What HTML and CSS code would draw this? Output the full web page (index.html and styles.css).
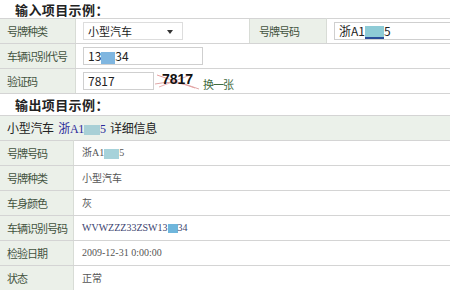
FILE: index.html
```html
<!DOCTYPE html>
<html lang="zh-CN">
<head>
    <meta charset="UTF-8">
    <title>机动车查询示例</title>
    <link rel="stylesheet" href="styles.css">
</head>
<body>
    <h3 class="title">输入项目示例：</h3>
    <table class="grid input-grid">
        <tr>
            <td class="label">号牌种类</td>
            <td class="value">
                <div class="select">小型汽车<span class="arrow"></span></div>
            </td>
            <td class="label">号牌号码</td>
            <td class="value">
                <div class="field wide">浙A1<span class="mask mask-plate"></span>5</div>
            </td>
        </tr>
        <tr>
            <td class="label">车辆识别代号</td>
            <td class="value" colspan="3">
                <div class="field vin">13<span class="mask mask-vin"></span>34</div>
            </td>
        </tr>
        <tr>
            <td class="label">验证码</td>
            <td class="value" colspan="3">
                <div class="captcha-row">
                    <div class="field code">7817</div>
                    <div class="captcha">
                        <svg width="44" height="20" viewBox="0 0 44 20">
                            <path d="M2 4 L40 17" stroke="#e8a0a0" stroke-width="1" fill="none"/>
                            <path d="M4 16 L38 3" stroke="#e8b0b0" stroke-width="1" fill="none"/>
                            <path d="M0 13 Q20 8 44 18" stroke="#e0a8a8" stroke-width="1" fill="none"/>
                        </svg>
                        <span>7817</span>
                    </div>
                    <a class="refresh">换一张</a>
                </div>
            </td>
        </tr>
    </table>

    <h3 class="title">输出项目示例：</h3>
    <div class="result-head">小型汽车 <span class="plate">浙A1<span class="mask mask-head"></span>5</span> 详细信息</div>
    <table class="grid output-grid">
        <tr>
            <td class="label">号牌号码</td>
            <td class="value serif gray">浙A1<span class="mask mask-small"></span>5</td>
        </tr>
        <tr>
            <td class="label">号牌种类</td>
            <td class="value gray">小型汽车</td>
        </tr>
        <tr>
            <td class="label">车身颜色</td>
            <td class="value gray">灰</td>
        </tr>
        <tr>
            <td class="label">车辆识别号码</td>
            <td class="value serif navy">WVWZZZ33ZSW13<span class="mask mask-code"></span>34</td>
        </tr>
        <tr>
            <td class="label">检验日期</td>
            <td class="value serif gray">2009-12-31 0:00:00</td>
        </tr>
        <tr>
            <td class="label">状态</td>
            <td class="value gray">正常</td>
        </tr>
    </table>
</body>
</html>
```

FILE: styles.css
```css
body {
    margin: 0;
    background: #fff;
    font-family: "Noto Sans CJK SC", "Liberation Sans", sans-serif;
    font-size: 11px;
    line-height: 14px;
    color: #333;
    width: 450px;
    overflow: hidden;
}
.title {
    margin: 0;
    padding: 2px 0 0 15px;
    height: 16px;
    line-height: 15px;
    font-size: 13px;
    letter-spacing: 0.4px;
    font-weight: bold;
    color: #222;
}
.grid {
    border-collapse: collapse;
    width: 470px;
    table-layout: fixed;
}
.grid td {
    border-top: 1px solid #d4d4d4;
    border-bottom: 1px solid #d4d4d4;
    height: 24px;
    padding: 0;
    vertical-align: middle;
    white-space: nowrap;
    overflow: hidden;
}
.label {
    background: #ebf0e9;
    color: #43533f;
    padding-left: 7px !important;
    border-right: 1px solid #d8dcd6;
    font-size: 11px;
    letter-spacing: -1px;
}
.input-grid {
    margin-bottom: 1px;
}
.input-grid td.label:first-child {
    width: 68px;
}
.input-grid tr:first-child td:nth-child(2) {
    width: 166px;
}
.input-grid tr:first-child td:nth-child(3) {
    width: 67px;
    padding-left: 9px !important;
    border-left: 1px solid #d8dcd6;
}
.input-grid .value {
    padding-left: 7px;
}
.select, .field {
    height: 18px;
    line-height: 16px;
    border: 1px solid #cfcfcf;
    background: #fff;
    padding-left: 4px;
    color: #222;
    font-size: 12px;
    box-sizing: border-box;
}
.select {
    width: 100px;
    position: relative;
    border-color: #ddd;
    font-size: 11px;
}
.arrow {
    position: absolute;
    right: 9px;
    top: 7px;
    border-left: 3px solid transparent;
    border-right: 3px solid transparent;
    border-top: 4px solid #333;
}
.field.wide {
    width: 130px;
}
.field.vin {
    width: 120px;
}
.captcha-row {
    display: flex;
    align-items: center;
}
.field.code {
    width: 71px;
}
.captcha {
    position: relative;
    width: 44px;
    height: 20px;
    margin-left: 1px;
}
.captcha svg {
    position: absolute;
    left: 0;
    top: 0;
}
.captcha span {
    position: relative;
    display: block;
    padding-left: 7px;
    font-family: "Liberation Sans", sans-serif;
    font-weight: bold;
    font-size: 14px;
    line-height: 16px;
    color: #111;
}
.refresh {
    margin-left: 4px;
    margin-top: 6px;
    font-size: 11px;
    letter-spacing: -1px;
    color: #3f6b3f;
}
.mask {
    display: inline-block;
    vertical-align: middle;
    background: #8ecbd6;
}
.mask-plate {
    width: 19px;
    height: 13px;
    border-bottom: 2px solid #2a4e9a;
    box-sizing: border-box;
}
.mask-vin {
    width: 14px;
    height: 12px;
    background: #7fb6e0;
}
.mask-head {
    width: 16px;
    height: 10px;
    background: #a8d0d6;
}
.mask-small {
    width: 15px;
    height: 10px;
    background: #a6d2da;
}
.mask-code {
    width: 10px;
    height: 9px;
    background: #6fb6dc;
}
.result-head {
    margin-top: 2px;
    height: 24px;
    line-height: 24px;
    background: #ebf1ea;
    border-top: 1px solid #d4d4d4;
    border-bottom: 1px solid #d4d4d4;
    padding-left: 7px;
    font-size: 12px;
    letter-spacing: -0.3px;
    color: #222;
}
.plate {
    font-family: "Liberation Serif", "Noto Sans CJK SC", serif;
    color: #2a2a9a;
    margin: 0 2px;
}
.output-grid {
    margin-top: -1px;
}
.output-grid .label {
    width: 66px;
}
.output-grid .value {
    padding-left: 8px;
    font-size: 10px;
}
.output-grid .value.serif {
    font-family: "Liberation Serif", "Noto Sans CJK SC", serif;
    font-size: 10px;
}
.gray {
    color: #555;
}
.navy {
    color: #3b3f6e;
}
```
